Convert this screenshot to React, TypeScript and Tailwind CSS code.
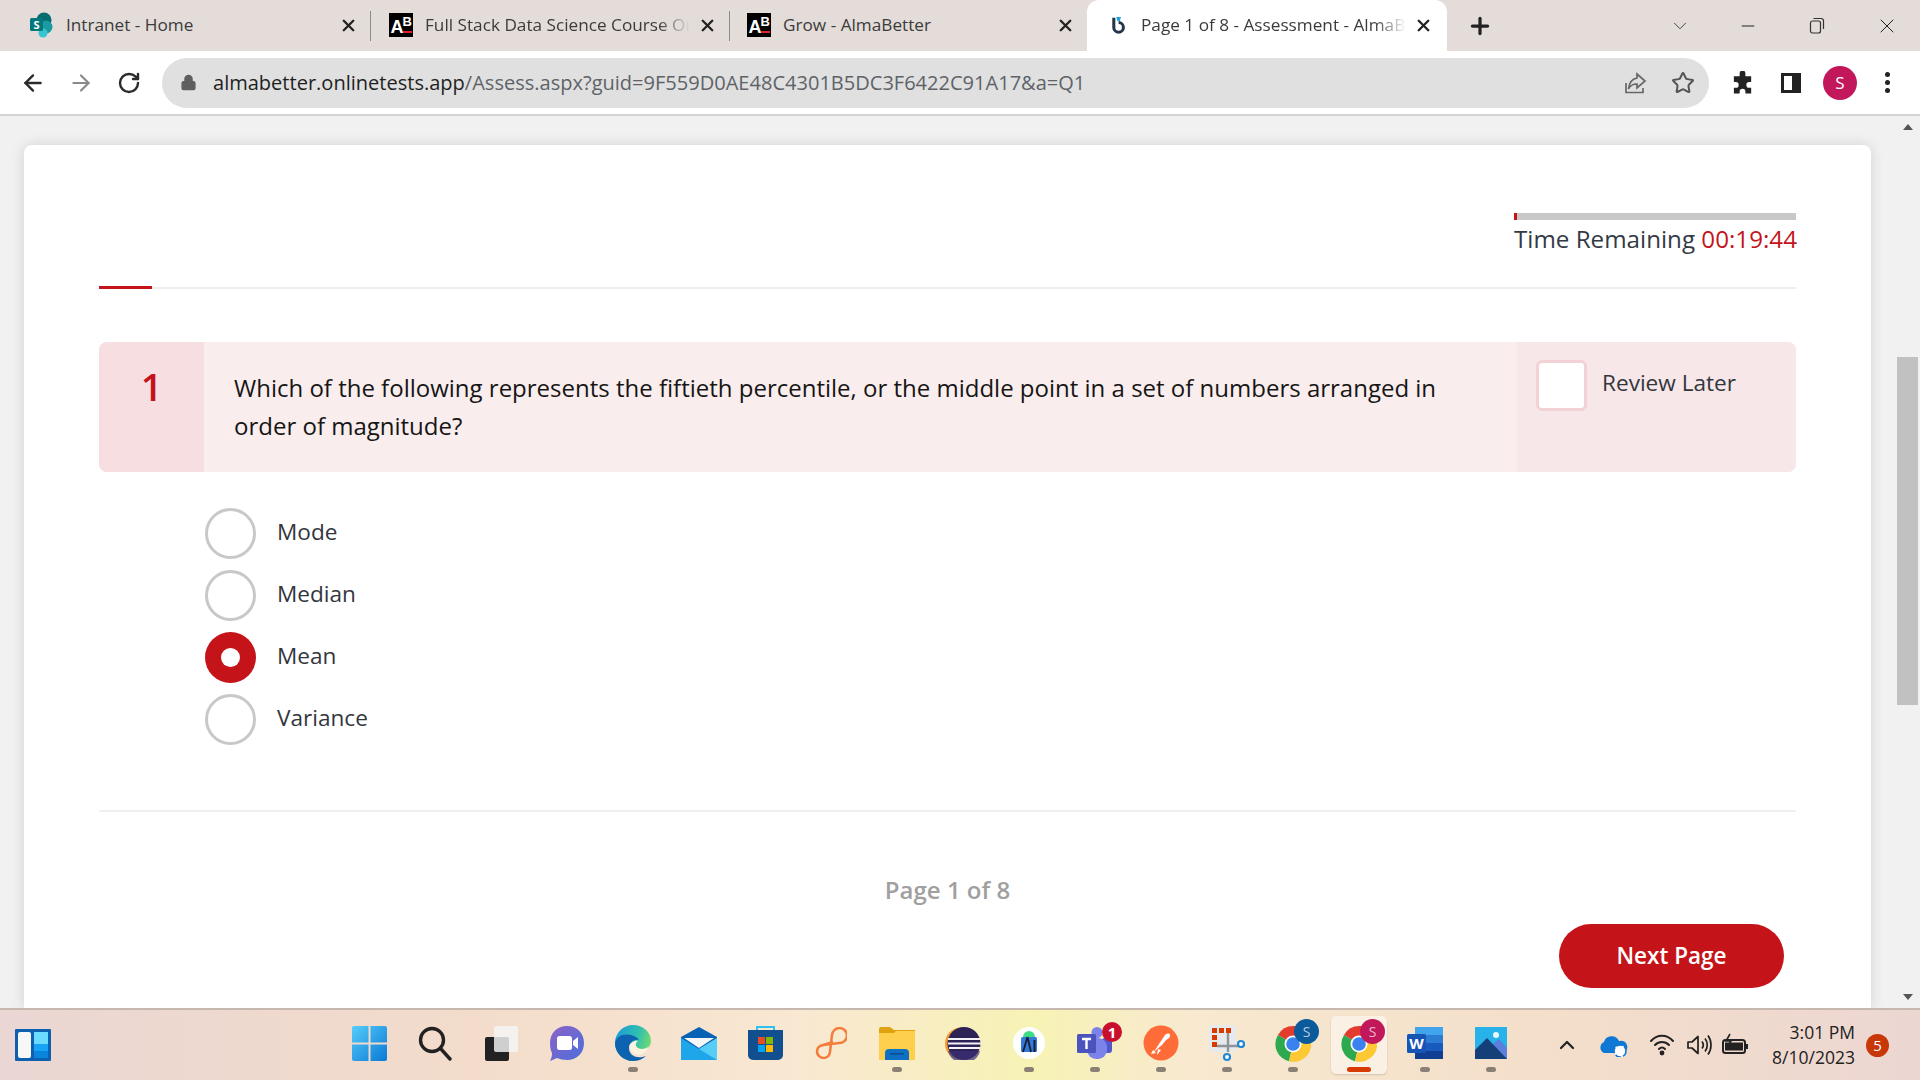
import { ArrowLeft, ArrowRight, ChevronDown, ChevronUp, Lock, Minus, Plus, RotateCw, Star, X } from "lucide-react";
import type { ReactNode } from "react";

const sans = "font-['Open_Sans',sans-serif]";

const SharePointIcon = () => (
  <svg width="24" height="26" viewBox="0 0 24 26">
    <circle cx="14" cy="8" r="7.5" fill="#036c70" />
    <circle cx="16" cy="15" r="6.5" fill="#1a9ba1" />
    <circle cx="13" cy="21" r="4.5" fill="#37c6d0" />
    <rect x="0" y="6" width="13" height="13" rx="1.5" fill="#03787c" />
    <text x="6.5" y="16.5" fontSize="11" fontWeight="700" fill="#fff" textAnchor="middle" fontFamily="Open Sans">S</text>
  </svg>
);

const AbIcon = () => (
  <svg width="24" height="24" viewBox="0 0 24 24">
    <rect width="24" height="24" fill="#000" />
    <text x="1.5" y="20" fontSize="18" fontWeight="700" fill="#fff" fontFamily="Liberation Sans">A</text>
    <text x="13.5" y="13" fontSize="13" fontWeight="700" fill="#fff" fontFamily="Liberation Sans">B</text>
    <rect x="14" y="18" width="9" height="2" fill="#e2202a" />
  </svg>
);

const AssessIcon = () => (
  <svg width="16" height="20" viewBox="0 0 20 24">
    <path d="M6 3 V15 A6 6 0 1 0 12 9" fill="none" stroke="#25344a" strokeWidth="3.8" />
    <path d="M9 2 L15 2 L13.5 7 L10.5 7 Z" fill="#1ba6e0" />
  </svg>
);

type TabProps = { icon: ReactNode; title: string; active?: boolean; fade?: boolean; divider?: boolean };

const Tab = ({ icon, title, active, fade, divider }: TabProps) => (
  <div
    className={
      "h-[51px] pb-[1px] flex items-center relative " +
      (active ? "w-[360px] bg-white rounded-t-[12px] pl-[17px]" : "w-[359px] pl-[17px]")
    }
  >
    <div className="w-[26px] flex justify-center shrink-0">{icon}</div>
    <div
      className={
        "ml-[11px] w-[265px] whitespace-nowrap overflow-hidden text-[17.2px] text-[#3b3b3b] " +
        (fade ? "[mask-image:linear-gradient(to_right,black_88%,transparent)]" : "")
      }
    >
      {title}
    </div>
    <X size={19} strokeWidth={3} className="text-[#222] ml-[8px] shrink-0" />
    {divider && <div className="absolute right-0 top-[11px] w-px h-[30px] bg-[#8e8a88]" />}
  </div>
);

const TabStrip = () => (
  <div className="h-[51px] bg-[#e3dcd9] flex pl-[12px] items-center shrink-0">
    <Tab icon={<SharePointIcon />} title="Intranet - Home" divider />
    <Tab icon={<AbIcon />} title="Full Stack Data Science Course Online" fade divider />
    <div className="w-[358px] -ml-[1px]">
      <Tab icon={<AbIcon />} title="Grow - AlmaBetter" />
    </div>
    <Tab icon={<AssessIcon />} title="Page 1 of 8 - Assessment - AlmaBetter" active fade />
    <Plus size={26} strokeWidth={3} className="ml-[20px] text-[#222]" />
    <ChevronDown size={22} strokeWidth={1} className="ml-[176px] text-[#333]" />
    <Minus size={20} strokeWidth={1.2} className="ml-[47px] text-[#222]" />
    <svg width="20" height="20" viewBox="0 0 20 20" className="ml-[49px]" fill="none" stroke="#333" strokeWidth="1.2">
      <rect x="3.5" y="5" width="10" height="12" rx="2" />
      <path d="M6.5 2.5 H14 a2.5 2.5 0 0 1 2.5 2.5 V13" />
    </svg>
    <X size={24} strokeWidth={1} className="ml-[48px] text-[#222]" />
  </div>
);

const ToolBar = () => (
  <div className="h-[65px] bg-white border-b-2 border-[#d2d2d2] flex items-center shrink-0">
    <ArrowLeft size={26} strokeWidth={2.2} className="ml-[20px] text-[#2b2b2b]" />
    <ArrowRight size={26} strokeWidth={2} className="ml-[22px] text-[#8a8a8a]" />
    <RotateCw size={24} strokeWidth={2.4} className="ml-[23px] text-[#2b2b2b]" />
    <div className="ml-[21px] w-[1547px] h-[50px] rounded-full bg-[#e0e0e0] flex items-center">
      <Lock size={17} fill="#5f5f5f" strokeWidth={2} className="ml-[18px] text-[#5f5f5f]" />
      <div className="ml-[16px] pt-[2px] text-[20.05px] text-[#5e6368] whitespace-nowrap">
        <span className="text-[#1f1f1f]">almabetter.onlinetests.app</span>/Assess.aspx?guid=9F559D0AE48C4301B5DC3F6422C91A17&amp;a=Q1
      </div>
      <svg width="24" height="24" viewBox="0 0 24 24" className="ml-auto" fill="none" stroke="#666" strokeWidth="1.7">
        <path d="M3 12 V21.5 H20 V17" />
        <path d="M14 3 L22 10 L14 17 V13 C10 13 7 14.5 5.5 18 C6 12 9 8 14 7 Z" />
      </svg>
      <Star size={24} strokeWidth={2} className="ml-[24px] mr-[14px] text-[#555]" />
    </div>
    <svg width="24" height="24" viewBox="0 0 24 24" className="ml-[22px]" fill="#222">
      <path d="M9 2 a3 3 0 0 1 6 0 V5 H21 V11 H19 a3 3 0 0 0 0 6 H21 V23 H15 V21 a3 3 0 0 0 -6 0 V23 H3 V17 H5 a3 3 0 0 0 0 -6 H3 V5 H9 Z" transform="translate(0 0.5) scale(0.96)" />
    </svg>
    <svg width="22" height="22" viewBox="0 0 22 22" className="ml-[25px]">
      <path fillRule="evenodd" d="M1 1 H21 V21 H1 Z M4 4 V18 H12 V4 Z" fill="#222" />
    </svg>
    <div className={"ml-[21px] w-[34px] h-[34px] rounded-full bg-[#c2185b] text-white text-[17px] flex items-center justify-center " + sans}>S</div>
    <div className="ml-[28px] flex flex-col gap-[3px]">
      <span className="w-[5px] h-[5px] rounded-full bg-[#222]" />
      <span className="w-[5px] h-[5px] rounded-full bg-[#222]" />
      <span className="w-[5px] h-[5px] rounded-full bg-[#222]" />
    </div>
  </div>
);

const options = ["Mode", "Median", "Mean", "Variance"];

const Card = () => (
  <div className={"w-[1847px] ml-[24px] mt-[29px] h-[863px] bg-white rounded-t-[8px] px-[75px] pt-[68px] shadow-[0_0_14px_rgba(0,0,0,0.13)] " + sans}>
    <div className="w-[282px] ml-auto">
      <div className="h-[7px] bg-[#c8c8c8]">
        <div className="w-[3px] h-full bg-[#c4141a]" />
      </div>
      <div className="mt-[1px] text-[24.2px] leading-[36px] text-[#333a45] whitespace-nowrap">
        Time Remaining <span className="text-[#c4141a]">00:19:44</span>
      </div>
    </div>
    <div className="mt-[30px] h-[2px] bg-[#eeeeee] relative">
      <div className="absolute left-0 -top-[1px] w-[53px] h-[3px] bg-[#c4141a]" />
    </div>

    <div className="mt-[53px] h-[130px] flex rounded-[8px] overflow-hidden bg-[#faeded]">
      <div className="w-[105px] bg-[#f7dfe1] flex justify-center pt-[20px] text-[38px] leading-[48px] font-semibold text-[#c4141a]">1</div>
      <div className="w-[1313px] pl-[30px] pr-[50px] pt-[27px] text-[24px] leading-[38px] text-[#161616]">
        Which of the following represents the fiftieth percentile, or the middle point in a set of numbers arranged in order of magnitude?
      </div>
      <div className="flex-1 bg-[#f7e7e8] pl-[19px] pt-[18px] flex items-start">
        <div className="w-[51px] h-[51px] bg-white rounded-[6px] border-[3px] border-[#f3d2d5]" />
        <div className="ml-[15px] mt-[6px] text-[22.6px] leading-[34px] text-[#33363d]">Review Later</div>
      </div>
    </div>

    <div className="mt-[36px] pl-[106px] flex flex-col gap-[11px]">
      {options.map((name) => (
        <div className="flex items-start h-[51px]" key={name}>
          {name === "Mean" ? (
            <div className="w-[51px] h-[51px] rounded-full bg-[#c4141a] flex items-center justify-center">
              <div className="w-[19px] h-[19px] rounded-full bg-white" />
            </div>
          ) : (
            <div className="w-[51px] h-[51px] rounded-full border-[3px] border-[#c8c8c8]" />
          )}
          <div className="ml-[21px] text-[22.6px] leading-[48px] text-[#33363d]">{name}</div>
        </div>
      ))}
    </div>

    <div className="mt-[65px] h-[2px] bg-[#f0f0f0]" />
    <div className="mt-[60px] text-center text-[24px] leading-[36px] font-semibold text-[#a0a0a0]">Page 1 of 8</div>
    <div className="flex justify-end pr-[12px] mt-[16px]">
      <button className="w-[225px] h-[64px] rounded-full bg-[#c4141a] text-white text-[22.5px] font-semibold">Next Page</button>
    </div>
  </div>
);

const ScrollBar = () => (
  <div className="w-[23px] ml-auto flex flex-col items-center pr-[2px]">
    <div className="mt-[8px] w-0 h-0 border-x-[5px] border-x-transparent border-b-[6px] border-b-[#555]" />
    <div className="mt-[227px] w-[21px] h-[348px] bg-[#c1c1c1]" />
    <div className="mt-[289px] w-0 h-0 border-x-[5px] border-x-transparent border-t-[6px] border-t-[#555]" />
  </div>
);

const ChromeIcon = ({ color }: { color: string }) => (
  <div className="relative w-[36px] h-[36px] mt-[2px]">
    <svg width="36" height="36" viewBox="0 0 36 36">
      <path d="M18 18 L3 9 A17.5 17.5 0 0 1 33.5 9 Z" fill="#e33b2e" />
      <path d="M18 18 L3 9 A17.5 17.5 0 0 0 14 35.2 Z" fill="#2da94f" />
      <path d="M18 18 L33.5 9 A17.5 17.5 0 0 1 14 35.2 Z" fill="#fcc934" />
      <circle cx="18" cy="18" r="8.5" fill="#fff" />
      <circle cx="18" cy="18" r="6.8" fill="#3b82f0" />
    </svg>
    <div className={"absolute -top-[7px] -right-[8px] w-[25px] h-[25px] rounded-full text-[14px] text-white/70 flex items-center justify-center " + sans} style={{ background: color }}>
      S
    </div>
  </div>
);

const icons: Record<string, ReactNode> = {
  start: (
    <svg width="35" height="35" viewBox="0 0 36 36">
      <defs>
        <linearGradient id="winA" x1="0" y1="0" x2="1" y2="1">
          <stop offset="0" stopColor="#55cdfb" />
          <stop offset="1" stopColor="#0a78d4" />
        </linearGradient>
      </defs>
      <path d="M2 0 H17 V17 H0 V2 A2 2 0 0 1 2 0 Z M19 0 H34 A2 2 0 0 1 36 2 V17 H19 Z M0 19 H17 V36 H2 A2 2 0 0 1 0 34 Z M19 19 H36 V34 A2 2 0 0 1 34 36 H19 Z" fill="url(#winA)" />
    </svg>
  ),
  search: (
    <svg width="36" height="36" viewBox="0 0 36 36" fill="none" stroke="#222" strokeWidth="3.4" strokeLinecap="round">
      <circle cx="15" cy="15" r="11.5" />
      <path d="M24 24 L33 34" />
    </svg>
  ),
  taskView: (
    <svg width="36" height="36" viewBox="0 0 36 36">
      <rect x="2" y="12" width="24" height="24" rx="2" fill="#222" />
      <rect x="11" y="1" width="24" height="26" rx="2" fill="#f5f5f5" fillOpacity="0.82" />
    </svg>
  ),
  chat: (
    <svg width="36" height="36" viewBox="0 0 36 36">
      <defs>
        <linearGradient id="chatA" x1="0" y1="0" x2="1" y2="1">
          <stop offset="0" stopColor="#8c63c6" />
          <stop offset="1" stopColor="#4b6fdc" />
        </linearGradient>
      </defs>
      <path d="M18 1 C28 1 35 8 35 18 C35 28 28 35 18 35 C14 35 11 34 8 33 L1 36 C3 32 3 30 3 28 C1.5 25 1 22 1 18 C1 8 8 1 18 1 Z" fill="url(#chatA)" />
      <rect x="8" y="11" width="15" height="14" rx="2.5" fill="#fff" />
      <path d="M24 16 L29 12 V24 L24 20 Z" fill="#fff" />
    </svg>
  ),
  edge: (
    <svg width="36" height="36" viewBox="0 0 36 36">
      <defs>
        <linearGradient id="edgeA" x1="0" y1="0.2" x2="1" y2="0.5">
          <stop offset="0" stopColor="#1d9bd8" />
          <stop offset="0.6" stopColor="#2fbfb0" />
          <stop offset="1" stopColor="#74dc6e" />
        </linearGradient>
      </defs>
      <path d="M18 0 C28 0 36 7 36 16 C36 22 31 25 26 25 C20 25 18 21 19 17 C15 18 12 21 12 26 C12 31 14 34 18 36 C8 36 0 28 0 18 C0 8 8 0 18 0 Z" fill="url(#edgeA)" />
      <path d="M0 18 C1 11 9 8 16 10 C20 11 23 13 24 15 C18 14 14 18 14 23 C14 29 20 35 31 31 C28 34 23 36 18 36 C8 36 0 28 0 18 Z" fill="#0d63b0" />
      <path d="M15 22 C15 18 19 15 23 16 C20 18 20 22 24 23.5 C27 24.5 30 24 33 22 C31 27 27 30 23 29.5 C18 29 15 26 15 22 Z" fill="#fbf3dd" />
    </svg>
  ),
  mail: (
    <svg width="36" height="33" viewBox="0 0 36 33">
      <path d="M0 10 L18 0 L36 10 V30 H0 Z" fill="#0a62b5" />
      <path d="M3 11 H33 L18 21 Z" fill="#f4f6f8" />
      <path d="M0 11 L18 22 L36 11 V33 H0 Z" fill="#1fa6ea" />
      <path d="M36 11 V33 L18 22 Z" fill="#56cdf6" />
    </svg>
  ),
  store: (
    <svg width="35" height="34" viewBox="0 0 35 34">
      <path d="M9 5 V1 H26 V5" fill="none" stroke="#2dc1f2" strokeWidth="2" />
      <path d="M0 4 H35 V29 A5 5 0 0 1 30 34 H5 A5 5 0 0 1 0 29 Z" fill="#124f8f" />
      <rect x="10" y="11" width="7" height="7" fill="#ea4b23" />
      <rect x="18" y="11" width="7" height="7" fill="#7fba00" />
      <rect x="10" y="19" width="7" height="7" fill="#00a4ef" />
      <rect x="18" y="19" width="7" height="7" fill="#ffb900" />
    </svg>
  ),
  loop: (
    <svg width="32" height="32" viewBox="0 0 32 32" fill="none" stroke="#f47c3c" strokeWidth="2.5">
      <path d="M18 15 L5 19 A6.5 6.5 0 1 0 15 25 L17 8 A7.5 7.5 0 1 1 24 16 L8 18" />
    </svg>
  ),
  folder: (
    <svg width="36" height="33" viewBox="0 0 36 33">
      <path d="M0 2 A2 2 0 0 1 2 0 H11 L15 3 H36 V10 H0 Z" fill="#e0a30f" />
      <path d="M0 6 H15 L17 4 H36 V33 H0 Z" fill="#fdcf4c" />
      <path d="M6 33 V26 A4 4 0 0 1 10 22 H26 A4 4 0 0 1 30 26 V33 Z" fill="#0e70c4" />
      <rect x="11" y="26" width="14" height="1.6" fill="#0a4f8f" />
    </svg>
  ),
  eclipse: (
    <svg width="36" height="33" viewBox="0 0 36 33">
      <circle cx="16" cy="16.5" r="16" fill="#f29a2e" />
      <circle cx="19" cy="16.5" r="16.5" fill="#2c2255" />
      <path d="M3 24 H35 A16.5 16.5 0 0 1 3 24 Z" fill="#3c2f78" opacity="0.7" />
      <rect x="3" y="11" width="32" height="2" fill="#f4f2f8" />
      <rect x="3" y="15.5" width="33" height="2" fill="#f4f2f8" />
      <rect x="4" y="20" width="31" height="2" fill="#f4f2f8" />
    </svg>
  ),
  android: (
    <svg width="32" height="32" viewBox="0 0 32 32">
      <circle cx="16" cy="16" r="16" fill="#fff" />
      <path d="M10 10 A6 6 0 0 1 22 10 Z" fill="#3ddc84" />
      <rect x="8" y="10" width="16" height="15" rx="1.5" fill="#3478dc" />
      <path d="M14.5 10 L10 25 M14.5 10 L18 25" stroke="#16202c" strokeWidth="1.8" fill="none" />
      <path d="M21.5 13 V25" stroke="#16202c" strokeWidth="2" />
    </svg>
  ),
  teams: (
    <div className="relative w-[36px] h-[32px]">
      <svg width="36" height="32" viewBox="0 0 36 32">
        <circle cx="20" cy="5.5" r="5.5" fill="#7b83eb" />
        <rect x="25" y="11" width="10" height="15" rx="3" fill="#5059c9" />
        <rect x="10" y="11" width="20" height="21" rx="9" fill="#7b83eb" />
        <rect x="0" y="7" width="19" height="19" rx="1.5" fill="#4b53bc" />
        <path d="M5 12 H14 M9.5 12 V22" stroke="#fff" strokeWidth="2.4" />
      </svg>
      <div className={"absolute -top-[5px] -right-[9px] w-[20px] h-[20px] rounded-full bg-[#c8102e] text-white text-[15px] font-bold flex items-center justify-center " + sans}>1</div>
    </div>
  ),
  postman: (
    <svg width="36" height="36" viewBox="0 0 36 36">
      <circle cx="18" cy="18" r="17.5" fill="#ff6c37" />
      <path d="M10 28 L16 19 L22 10 C24 8 27 8 27 10 C27 13 25 14 23 15 L19 20 L13 25 Z" fill="#fff" />
      <path d="M8 29 L13 28 L10 25 Z" fill="#fff" />
      <path d="M15 24 L14 30 L18 25 Z" fill="#fff" />
    </svg>
  ),
  snip: (
    <svg width="36" height="37" viewBox="0 0 36 37">
      <rect x="0" y="0" width="27" height="27" rx="3" fill="#e6eaec" />
      <rect x="3" y="3" width="5" height="5" fill="#d83b01" />
      <rect x="10" y="3" width="5" height="5" fill="#d83b01" />
      <rect x="17" y="3" width="5" height="5" fill="#d83b01" />
      <rect x="3" y="10" width="5" height="5" fill="#d83b01" />
      <rect x="3" y="17" width="5" height="5" fill="#d83b01" />
      <path d="M19 8 V27 M8 21 H30" fill="none" stroke="#8e9499" strokeWidth="2.4" />
      <circle cx="32" cy="19" r="3" fill="#fff" stroke="#2088d8" strokeWidth="2.2" />
      <circle cx="18" cy="32" r="3" fill="#fff" stroke="#2088d8" strokeWidth="2.2" />
    </svg>
  ),
  chrome1: <ChromeIcon color="#0b5a9c" />,
  chrome2: <ChromeIcon color="#c2185b" />,
  word: (
    <svg width="36" height="32" viewBox="0 0 36 32">
      <rect x="8" y="0" width="28" height="8" fill="#41a5ee" />
      <rect x="8" y="8" width="28" height="8" fill="#2b7cd3" />
      <rect x="8" y="16" width="28" height="8" fill="#185abd" />
      <rect x="8" y="24" width="28" height="8" fill="#103f91" />
      <rect x="0" y="7" width="19" height="19" rx="1.5" fill="#1655b5" />
      <text x="9.5" y="21.5" fontSize="15" fontWeight="700" fill="#fff" textAnchor="middle" fontFamily="Open Sans">W</text>
    </svg>
  ),
  photos: (
    <svg width="32" height="32" viewBox="0 0 32 32">
      <rect width="32" height="32" fill="#27b2ea" />
      <circle cx="21" cy="8" r="3" fill="#e8f8ff" />
      <path d="M18 17 L24 12 L32 21 V32 H24 Z" fill="#5b7fdb" />
      <path d="M0 23 L12 11 L32 32 H0 Z" fill="#143f78" />
    </svg>
  ),
};

const dockItems: { id: string; dot?: boolean; active?: boolean }[] = [
  { id: "start" },
  { id: "search" },
  { id: "taskView" },
  { id: "chat" },
  { id: "edge", dot: true },
  { id: "mail" },
  { id: "store" },
  { id: "loop" },
  { id: "folder", dot: true },
  { id: "eclipse" },
  { id: "android", dot: true },
  { id: "teams", dot: true },
  { id: "postman", dot: true },
  { id: "snip", dot: true },
  { id: "chrome1", dot: true },
  { id: "chrome2", active: true },
  { id: "word", dot: true },
  { id: "photos", dot: true },
];

const TaskBar = () => (
  <div className="h-[72px] border-t-2 border-[#c6b8ae] bg-[linear-gradient(90deg,#ead6d3_0%,#f3dccb_25%,#f9e8d2_42%,#f7f3b4_54%,#f8e9d0_62%,#f4dfca_80%,#ecd6d2_100%)] flex items-start shrink-0">
    <div className="w-[66px] h-full flex items-center justify-center">
      <svg width="36" height="32" viewBox="0 0 36 32">
        <rect width="36" height="32" rx="1" fill="#0d5fb0" />
        <rect x="3" y="3" width="13" height="26" rx="2" fill="#f7f7f7" />
        <rect x="19" y="3" width="14" height="12" fill="#6bdcff" />
        <rect x="19" y="15" width="14" height="7" fill="#18a4f5" />
        <rect x="19" y="22" width="14" height="7" fill="#0a84dc" />
      </svg>
    </div>
    <div className="ml-[270px] flex">
      {dockItems.map((item) => (
        <div className="w-[66px] h-[70px] flex flex-col items-center relative" key={item.id}>
          {item.active && (
            <div className="absolute left-[5px] top-[6px] w-[56px] h-[58px] bg-[#faf0e4] rounded-[5px] shadow-[0_1px_2px_rgba(0,0,0,0.15)]" />
          )}
          <div className="h-[57px] pt-[9px] flex items-center justify-center relative">{icons[item.id]}</div>
          {item.active ? (
            <div className="w-[24px] h-[5px] rounded-full bg-[#d83b01] relative" />
          ) : (
            <div className={"w-[10px] h-[5px] rounded-full " + (item.dot ? "bg-[#8a8076]" : "")} />
          )}
        </div>
      ))}
    </div>
    <div className="ml-[31px] h-full flex items-center">
      <ChevronUp size={24} strokeWidth={2.2} className="text-[#222]" />
      <svg width="30" height="24" viewBox="0 0 30 24" className="ml-[19px]">
        <path d="M6 20 A6 6 0 0 1 6 9 A8 8 0 0 1 21 8 A6 6 0 0 1 25 20 Z" fill="#0f78d4" />
        <circle cx="22" cy="18" r="6" fill="#fff" stroke="#0f78d4" strokeWidth="1.5" strokeDasharray="6 2" />
      </svg>
      <svg width="26" height="24" viewBox="0 0 26 24" className="ml-[21px]" fill="none" stroke="#222" strokeWidth="2" strokeLinecap="round">
        <path d="M2 8 C8 1 18 1 24 8" />
        <path d="M6 12 C10 8 16 8 20 12" />
        <path d="M10 16 C12 14 14 14 16 16" />
        <circle cx="13" cy="20" r="1.4" fill="#222" />
      </svg>
      <svg width="26" height="24" viewBox="0 0 26 24" className="ml-[11px]" fill="none" stroke="#222" strokeWidth="1.7" strokeLinejoin="round">
        <path d="M2 9 H6 L12 3.5 V20.5 L6 15 H2 Z" />
        <path d="M16 8.5 C17.5 10.5 17.5 13.5 16 15.5 M19 5.5 C22 9 22 15 19 18.5 M22 2.5 C26 8 26 16 22 21.5" />
      </svg>
      <svg width="28" height="24" viewBox="0 0 28 24" className="ml-[9px]" fill="none" stroke="#222" strokeWidth="2">
        <rect x="2" y="7" width="22" height="13" rx="2.5" />
        <rect x="4" y="9.5" width="18" height="8" fill="#222" stroke="none" />
        <path d="M24.5 11 H27 V16 H24.5" fill="#222" stroke="none" />
        <path d="M9 1 L5 8 H10 L7 13" stroke="#222" strokeWidth="1.6" />
      </svg>
      <div className={"w-[106px] text-right text-[17.5px] leading-[25px] text-[#222] " + sans}>
        <div>3:01 PM</div>
        <div>8/10/2023</div>
      </div>
      <div className={"ml-[11px] w-[23px] h-[23px] rounded-full bg-[#c83707] text-white text-[15px] flex items-center justify-center " + sans}>5</div>
    </div>
  </div>
);

export default function App() {
  return (
    <div className={"w-[1920px] h-[1080px] overflow-hidden flex flex-col bg-[#f1f1f1] " + sans}>
      <TabStrip />
      <ToolBar />
      <div className="flex-1 flex overflow-hidden">
        <Card />
        <ScrollBar />
      </div>
      <TaskBar />
    </div>
  );
}
